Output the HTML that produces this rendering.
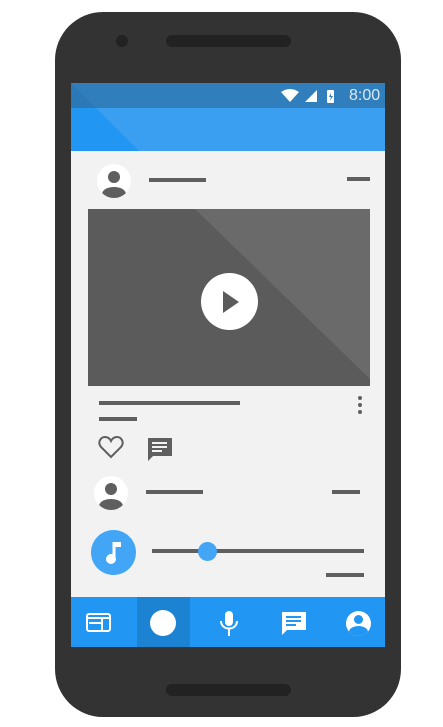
<html><head><style>
body{margin:0;width:443px;height:727px;background:#fff;position:relative;overflow:hidden;font-family:"Liberation Sans",sans-serif}
.a{position:absolute}
.bar{position:absolute;background:#5f5f5f;height:4px}
</style></head><body>
<div class="a" style="left:55px;top:12px;width:346px;height:705px;background:#333;border-radius:48px"></div>
<div class="a" style="left:116px;top:35px;width:12px;height:12px;border-radius:50%;background:#222"></div>
<div class="a" style="left:166px;top:35px;width:125px;height:12px;border-radius:6px;background:#222"></div>
<div class="a" style="left:166px;top:684px;width:125px;height:12px;border-radius:6px;background:#222"></div>
<div class="a" style="left:71px;top:83px;width:314px;height:564px;background:#f2f2f2;overflow:hidden">
 <div class="a" style="left:0;top:0;width:314px;height:68px;background:#3a9ff0"></div>
 <svg class="a" style="left:0;top:0" width="314" height="68"><polygon points="0,0 68,68 0,68" fill="#2196f3"/></svg>
 <div class="a" style="left:0;top:0;width:314px;height:25px;background:#307fbc"></div>
 <svg class="a" style="left:0;top:0" width="30" height="25"><polygon points="0,0 25,25 0,25" fill="#2a78b6"/></svg>
 <svg class="a" style="left:210px;top:5px" width="60" height="16"><path d="M0 4 Q9 -2 18 4 L9 14Z" fill="#fff"/><path d="M24 14 L36 2 L36 14Z" fill="#fff"/><rect x="46" y="2" width="7" height="13" rx="1" fill="#fff"/><path d="M50 5 L48 9 L50 9 L49 13 L52 8 L50 8Z" fill="#307fbc"/></svg>
 <div class="a" style="left:278px;top:4px;color:#dbe9f6;font-size:16px">8:00</div>
 <div class="a" style="left:26px;top:81px;width:34px;height:34px;border-radius:50%;background:#fff;overflow:hidden"><div class="a" style="left:11px;top:7px;width:12px;height:12px;border-radius:50%;background:#5f5f5f"></div><div class="a" style="left:5px;top:23px;width:24px;height:14px;border-radius:50%;background:#5f5f5f"></div></div>
 <div class="bar" style="left:78px;top:95px;width:57px"></div>
 <div class="bar" style="left:276px;top:94px;width:23px"></div>
 <div class="a" style="left:17px;top:126px;width:282px;height:177px;background:#5b5b5b;overflow:hidden"><svg width="282" height="177"><polygon points="107,0 282,0 282,170" fill="#6a6a6a"/></svg></div>
 <div class="a" style="left:130px;top:190px;width:57px;height:57px;border-radius:50%;background:#fff"></div>
 <svg class="a" style="left:150px;top:206px" width="20" height="26"><path d="M2 2 L18 13 L2 24Z" fill="#5b5b5b"/></svg>
 <div class="bar" style="left:28px;top:318px;width:141px"></div>
 <div class="bar" style="left:28px;top:334px;width:38px"></div>
 <div class="a" style="left:287px;top:313px;width:4px;height:4px;border-radius:50%;background:#5f5f5f;box-shadow:0 7px #5f5f5f,0 14px #5f5f5f"></div>
 <svg class="a" style="left:27px;top:353px" width="26" height="24"><path d="M13 21 L3 11 C-1 6 3 1 7 1 C10 1 12 3 13 5 C14 3 16 1 19 1 C23 1 27 6 23 11Z" fill="none" stroke="#5f5f5f" stroke-width="2"/></svg>
 <svg class="a" style="left:76px;top:354px" width="26" height="26"><path d="M1 1 H25 V19 H6 L1 24Z" fill="#5f5f5f"/><rect x="5" y="5" width="15" height="2" fill="#f2f2f2"/><rect x="5" y="9" width="15" height="2" fill="#f2f2f2"/><rect x="5" y="13" width="10" height="2" fill="#f2f2f2"/></svg>
 <div class="a" style="left:23px;top:393px;width:34px;height:34px;border-radius:50%;background:#fff;overflow:hidden"><div class="a" style="left:11px;top:7px;width:12px;height:12px;border-radius:50%;background:#5f5f5f"></div><div class="a" style="left:5px;top:23px;width:24px;height:14px;border-radius:50%;background:#5f5f5f"></div></div>
 <div class="bar" style="left:75px;top:407px;width:57px"></div>
 <div class="bar" style="left:261px;top:407px;width:28px"></div>
 <div class="a" style="left:20px;top:447px;width:45px;height:45px;border-radius:50%;background:#42a5f5"></div>
 <svg class="a" style="left:32px;top:456px" width="22" height="28"><path d="M11 3 V20" stroke="#fff" stroke-width="3"/><path d="M11 3 H18 V8 H11Z" fill="#fff"/><circle cx="8" cy="20" r="5" fill="#fff"/></svg>
 <div class="bar" style="left:81px;top:466px;width:212px"></div>
 <div class="a" style="left:127px;top:459px;width:19px;height:19px;border-radius:50%;background:#42a5f5"></div>
 <div class="bar" style="left:255px;top:490px;width:38px"></div>
 <div class="a" style="left:0;top:514px;width:314px;height:50px;background:#2196f3"></div>
 <div class="a" style="left:66px;top:514px;width:53px;height:50px;background:#1c82d2"></div>
 <svg class="a" style="left:15px;top:530px" width="26" height="20"><rect x="1" y="1" width="23" height="17" rx="2" fill="none" stroke="#fff" stroke-width="2"/><rect x="1" y="4" width="23" height="2" fill="#fff"/><rect x="3" y="9" width="12" height="2" fill="#fff"/><rect x="15" y="6" width="2" height="11" fill="#fff"/></svg>
 <div class="a" style="left:79px;top:527px;width:26px;height:26px;border-radius:50%;background:#fff"></div>
 <svg class="a" style="left:147px;top:527px" width="22" height="28"><rect x="7" y="1" width="8" height="15" rx="4" fill="#fff"/><path d="M3 11 C3 21 19 21 19 11" fill="none" stroke="#fff" stroke-width="2"/><path d="M11 18 V26" stroke="#fff" stroke-width="2"/></svg>
 <svg class="a" style="left:210px;top:528px" width="26" height="26"><path d="M1 1 H25 V19 H6 L1 24Z" fill="#fff"/><rect x="5" y="5" width="15" height="2" fill="#2196f3"/><rect x="5" y="9" width="15" height="2" fill="#2196f3"/><rect x="5" y="13" width="10" height="2" fill="#2196f3"/></svg>
 <div class="a" style="left:275px;top:528px;width:25px;height:25px;border-radius:50%;background:#fff;overflow:hidden"><div class="a" style="left:8px;top:4px;width:9px;height:9px;border-radius:50%;background:#2196f3"></div><div class="a" style="left:3px;top:15px;width:19px;height:12px;border-radius:50%;background:#2196f3"></div></div>
</div>
</body></html>
